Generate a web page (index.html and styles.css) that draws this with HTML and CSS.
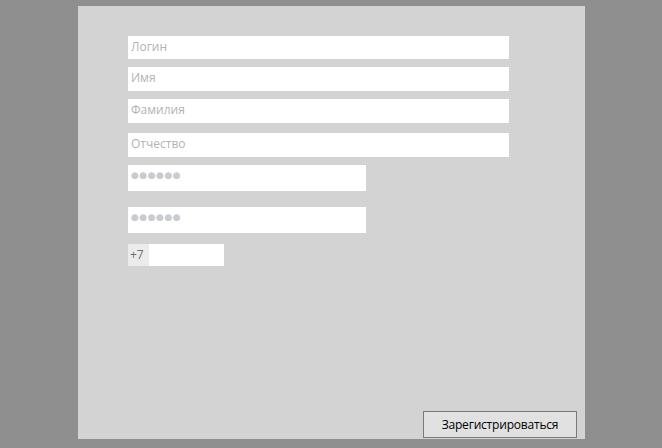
FILE: index.html
```html
<!DOCTYPE html>
<html lang="ru">
<head>
<meta charset="utf-8">
<link rel="stylesheet" href="styles.css">
</head>
<body>
<div class="panel">
  <form class="form">
    <input class="field field-wide f1" type="text" placeholder="Логин">
    <input class="field field-wide f2" type="text" placeholder="Имя">
    <input class="field field-wide f3" type="text" placeholder="Фамилия">
    <input class="field field-wide f4" type="text" placeholder="Отчество">
    <input class="field field-pass p1" type="password" placeholder="●●●●●●">
    <input class="field field-pass p2" type="password" placeholder="●●●●●●">
    <div class="phone">
      <span class="prefix">+7</span>
      <input class="phone-input" type="text">
    </div>
  </form>
  <button class="submit" type="button">Зарегистрироваться</button>
</div>
</body>
</html>
```
FILE: styles.css
```css
html, body {
  margin: 0;
  padding: 0;
  background: #8f8f8f;
  font-family: "Open Sans", "Noto Sans", "Liberation Sans", sans-serif;
}
body {
  width: 662px;
  height: 448px;
  overflow: hidden;
}
.panel {
  box-sizing: border-box;
  margin: 6px 0 0 78px;
  width: 507px;
  height: 433px;
  background: #d3d3d3;
  padding: 30px 8px 1px 50px;
  display: flex;
  flex-direction: column;
}
.form {
  display: flex;
  flex-direction: column;
  align-items: flex-start;
}
.field {
  box-sizing: border-box;
  border: none;
  outline: none;
  background: #ffffff;
  margin: 0;
  padding: 0 3px 3px;
  font-family: inherit;
  font-size: 12px;
  color: #333;
}
.field::placeholder {
  color: #b3b3b3;
}
.field-wide {
  width: 381px;
  height: 24px;
}
.f1 { height: 23px; }
.f2 { margin-top: 8px; }
.f3 { margin-top: 8px; }
.f4 { margin-top: 10px; }
.field-pass {
  width: 238px;
  height: 26px;
  padding-left: 3px;
  padding-bottom: 9px;
}
.field-pass::placeholder {
  font-family: "DejaVu Sans", sans-serif;
  font-size: 9px;
  letter-spacing: 0.5px;
  color: #c8cbd0;
}
.p1 { margin-top: 8px; }
.p2 { margin-top: 16px; }
.phone {
  margin-top: 11px;
  display: flex;
  width: 96px;
  height: 22px;
  background: #ffffff;
}
.prefix {
  width: 21px;
  background: #ebebeb;
  color: #6f6f6f;
  font-size: 12px;
  line-height: 21px;
  padding-left: 2px;
  box-sizing: border-box;
}
.phone-input {
  flex: 1;
  min-width: 0;
  border: none;
  outline: none;
  background: #fff;
  padding: 0 3px;
}
.submit {
  margin-top: auto;
  align-self: flex-end;
  box-sizing: border-box;
  width: 154px;
  height: 27px;
  background: #e1e1e1;
  border: 1px solid #7a7a7a;
  border-radius: 0;
  font-family: inherit;
  font-size: 12px;
  letter-spacing: -0.2px;
  color: #000;
  padding: 0;
}
```
